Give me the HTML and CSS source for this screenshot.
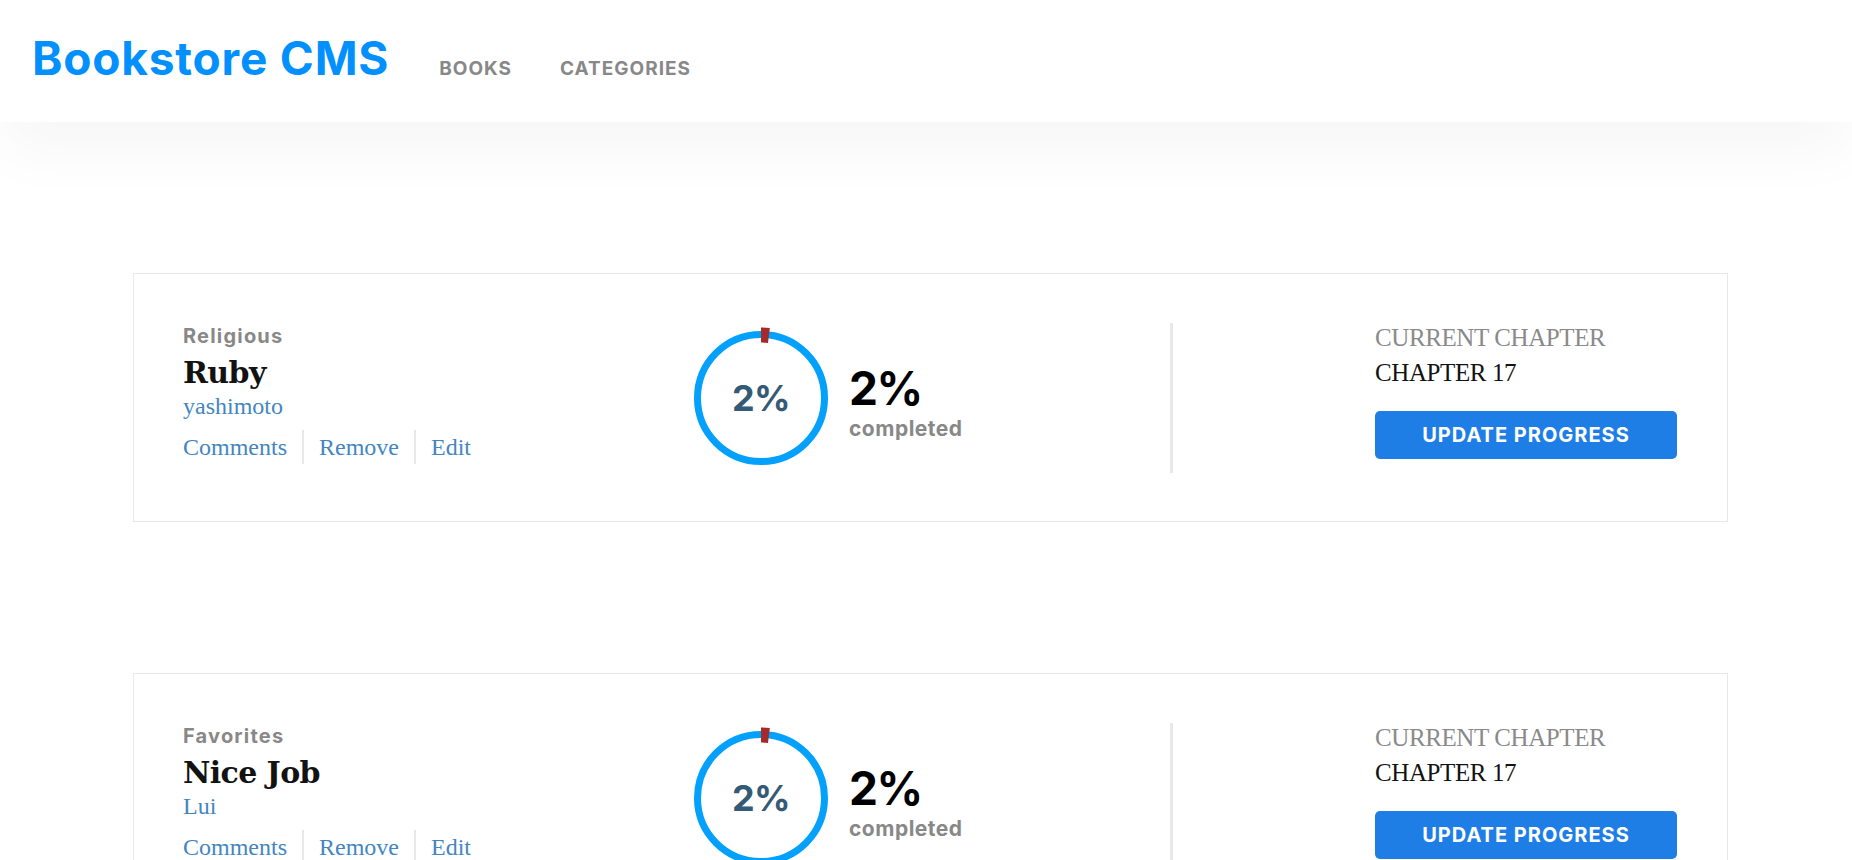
FILE: index.html
```html
<!DOCTYPE html>
<html lang="en">
<head>
<meta charset="utf-8">
<title>Bookstore CMS</title>
<link rel="stylesheet" href="styles.css">
</head>
<body>
<header class="header">
  <h1 class="logo">Bookstore CMS</h1>
  <nav class="nav">
    <a class="nav-link" href="#">BOOKS</a>
    <a class="nav-link" href="#">CATEGORIES</a>
  </nav>
</header>
<main class="books">
  <article class="card">
    <div class="info">
      <p class="genre">Religious</p>
      <h2 class="title">Ruby</h2>
      <p class="author">yashimoto</p>
      <div class="actions">
        <a class="action" href="#">Comments</a>
        <a class="action sep" href="#">Remove</a>
        <a class="action sep" href="#">Edit</a>
      </div>
    </div>
    <div class="progress">
      <div class="ring">
        <svg class="ring-svg" width="142" height="142" viewBox="0 0 142 142">
          <circle cx="71" cy="71" r="63.5" fill="none" stroke="#03a1fc" stroke-width="7"/>
          <circle cx="71" cy="71" r="63" fill="none" stroke="#a52a2a" stroke-width="15" stroke-dasharray="8 400" transform="rotate(-90 71 71)"/>
        </svg>
        <span class="ring-label">2%</span>
      </div>
      <div class="stats">
        <p class="percent">2%</p>
        <p class="completed">completed</p>
      </div>
    </div>
    <div class="chapter">
      <p class="chapter-label">CURRENT CHAPTER</p>
      <p class="chapter-value">CHAPTER 17</p>
      <button class="update-btn" type="button">UPDATE PROGRESS</button>
    </div>
  </article>
  <article class="card">
    <div class="info">
      <p class="genre">Favorites</p>
      <h2 class="title">Nice Job</h2>
      <p class="author">Lui</p>
      <div class="actions">
        <a class="action" href="#">Comments</a>
        <a class="action sep" href="#">Remove</a>
        <a class="action sep" href="#">Edit</a>
      </div>
    </div>
    <div class="progress">
      <div class="ring">
        <svg class="ring-svg" width="142" height="142" viewBox="0 0 142 142">
          <circle cx="71" cy="71" r="63.5" fill="none" stroke="#03a1fc" stroke-width="7"/>
          <circle cx="71" cy="71" r="63" fill="none" stroke="#a52a2a" stroke-width="15" stroke-dasharray="8 400" transform="rotate(-90 71 71)"/>
        </svg>
        <span class="ring-label">2%</span>
      </div>
      <div class="stats">
        <p class="percent">2%</p>
        <p class="completed">completed</p>
      </div>
    </div>
    <div class="chapter">
      <p class="chapter-label">CURRENT CHAPTER</p>
      <p class="chapter-value">CHAPTER 17</p>
      <button class="update-btn" type="button">UPDATE PROGRESS</button>
    </div>
  </article>
</main>
</body>
</html>
```

FILE: styles.css
```css
* {
  box-sizing: border-box;
}

html, body {
  margin: 0;
  padding: 0;
  background: #fff;
}

body {
  font-family: "Inter", "DejaVu Sans", sans-serif;
  color: #121212;
  overflow: hidden;
}

p, h1, h2 {
  margin: 0;
}

a {
  text-decoration: none;
}

.header {
  position: relative;
  z-index: 1;
  height: 122px;
  padding: 35px 0 0 32px;
  display: flex;
  align-items: baseline;
  background: #fff;
  box-shadow: 0 30px 60px rgba(0, 0, 0, 0.035);
}

.logo {
  font-size: 46px;
  line-height: 46px;
  font-weight: 700;
  color: #0290ff;
  letter-spacing: 0.8px;
}

.nav {
  display: flex;
  gap: 48px;
  margin-left: 50px;
}

.nav-link {
  font-size: 19px;
  font-weight: 700;
  color: #888;
  letter-spacing: 1px;
}

.books {
  display: flex;
  flex-direction: column;
  gap: 151px;
  padding: 151px 0 0 133px;
}

.card {
  width: 1595px;
  height: 249px;
  display: flex;
  align-items: center;
  padding: 0 46px 0 49px;
  background: #fff;
  border: 1px solid #e8e8e8;
}

.info {
  width: 507px;
  flex: none;
  margin-bottom: 7px;
}

.genre {
  font-size: 20px;
  line-height: 24px;
  font-weight: 700;
  color: #888;
  letter-spacing: 1.2px;
}

.title {
  margin-top: 7px;
  font-family: "DejaVu Serif", serif;
  font-size: 30px;
  line-height: 36px;
  font-weight: 700;
  color: #121212;
  letter-spacing: -0.6px;
}

.author {
  margin-top: 1px;
  font-family: "Liberation Serif", serif;
  font-size: 24px;
  line-height: 28px;
  color: #4386bf;
}

.actions {
  display: flex;
  margin-top: 10px;
}

.action {
  font-family: "Liberation Serif", serif;
  font-size: 24px;
  line-height: 34px;
  color: #4386bf;
  padding-right: 15px;
}

.action.sep {
  border-left: 2px solid #e8e8e8;
  padding-left: 15px;
}

.progress {
  width: 483px;
  flex: none;
  height: 150px;
  display: flex;
  align-items: center;
  border-right: 3px solid #e8e8e8;
}

.ring {
  display: grid;
  place-items: center;
  width: 142px;
  height: 142px;
}

.ring-svg,
.ring-label {
  grid-area: 1 / 1;
}

.ring-label {
  font-size: 36px;
  line-height: 36px;
  font-weight: 700;
  color: #345a75;
  letter-spacing: -0.5px;
}

.stats {
  margin-left: 17px;
  padding-top: 11px;
}

.percent {
  font-size: 46px;
  line-height: 47px;
  font-weight: 700;
  color: #000;
  letter-spacing: -1.5px;
}

.completed {
  margin-top: 5px;
  font-size: 21px;
  line-height: 24px;
  font-weight: 700;
  color: #888;
  letter-spacing: 0.5px;
}

.chapter {
  margin-left: 202px;
  margin-bottom: 16px;
}

.chapter-label,
.chapter-value {
  font-family: "Liberation Serif", serif;
  font-size: 25px;
  letter-spacing: -0.4px;
}

.chapter-label {
  line-height: 36px;
  color: #8a8a8a;
}

.chapter-value {
  line-height: 33px;
  color: #121212;
}

.update-btn {
  display: block;
  margin-top: 22px;
  width: 302px;
  height: 48px;
  border: none;
  border-radius: 5px;
  background: #1f7ee6;
  color: #fff;
  font-family: "Inter", "DejaVu Sans", sans-serif;
  font-size: 20px;
  font-weight: 700;
  letter-spacing: 1px;
  padding: 0;
}
```
